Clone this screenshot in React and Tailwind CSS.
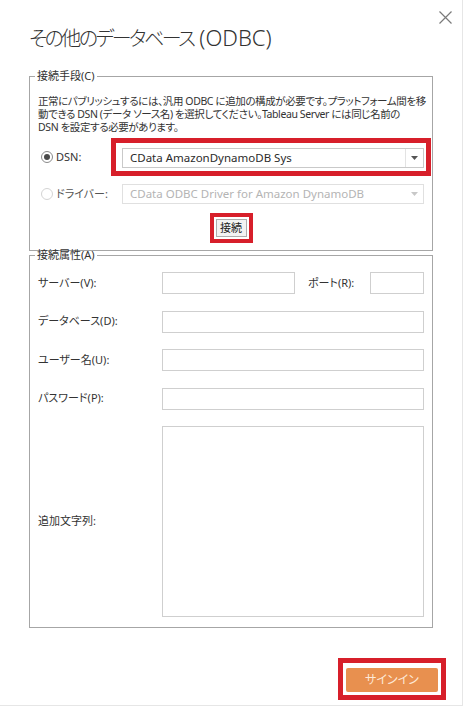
import React from 'react';

const FONT = "font-['Noto_Sans','Noto_Sans_CJK_JP',sans-serif] [font-feature-settings:'palt']";

function Radio({ checked, disabled }) {
  return (
    <span
      className={`flex items-center justify-center w-[12px] h-[12px] rounded-full border bg-white ${
        disabled ? 'border-[#d4d4d4]' : 'border-[#8a8a8a]'
      }`}
    >
      {checked && <span className="w-[6px] h-[6px] rounded-full bg-[#4a4a4a]" />}
    </span>
  );
}

function Combo({ value, disabled }) {
  return (
    <div
      className={`flex items-stretch h-[20px] border bg-white ${
        disabled ? 'border-[#e0e0e0]' : 'border-[#c9c9c9]'
      }`}
    >
      <span
        className={`flex-1 flex items-center pl-[7px] text-[11.5px] ${
          disabled ? 'text-[#b4b4b4]' : 'text-[#2b2b2b]'
        }`}
      >
        {value}
      </span>
      <span className={`w-[18px] flex items-center justify-center border-l ${disabled ? 'border-transparent' : 'border-[#e3e3e3]'}`}>
        <svg width="7" height="4" viewBox="0 0 7 4">
          <path d="M0 0h7L3.5 4z" fill={disabled ? '#c8c8c8' : '#555'} />
        </svg>
      </span>
    </div>
  );
}

function Field({ className = '' }) {
  return <div className={`h-[22px] border border-[#cfcfcf] bg-white ${className}`} />;
}

export default function App() {
  return (
    <div className={`w-[466px] h-[707px] bg-white text-[#333] ${FONT}`}>
      <div className="w-[463px] h-[706px] border-r border-b border-[#e6e6e6] flex flex-col">
        {/* Header */}
        <div className="flex items-start justify-between pl-[29px] pr-[10px] pt-[11px]">
          <h1 className="mt-[11px] text-[22px] leading-[30px] font-light text-[#333] whitespace-nowrap">
            <span className="text-[20px] tracking-[-2.5px]">その他のデータベース</span> (ODBC)
          </h1>
          <svg width="13" height="13" viewBox="0 0 13 13" className="shrink-0">
            <path d="M0.5 0.5l12 12M12.5 0.5l-12 12" stroke="#7a7a7a" strokeWidth="1.2" />
          </svg>
        </div>

        {/* 接続手段 */}
        <fieldset className="mt-[15px] ml-[29px] w-[404px] border border-[#a6a6a6] pl-[8px] pr-[1px] pb-[7px]">
          <legend className="ml-[-3px] px-[2px] text-[11px] leading-[14px] text-[#333]">接続手段(C)</legend>
          <p className="mt-[12px] text-[10.5px] leading-[13px] tracking-[-0.4px] whitespace-nowrap text-[#333]">
            正常にパブリッシュするには、汎用 ODBC に追加の構成が必要です。プラットフォーム間を移
            <br />
            動できる DSN (データ ソース名) を選択してください。Tableau Server には同じ名前の
            <br />
            DSN を設定する必要があります。
          </p>

          <div className="mt-[4px] flex items-center">
            <div className="w-[73px] flex items-center gap-[3px] pl-[3px]">
              <Radio checked />
              <span className="text-[11px]">DSN:</span>
            </div>
            <div className="w-[320px] border-[5px] border-[#d71f2a] pt-[5px] pb-[3px] pl-[6px] pr-[2px]">
              <Combo value="CData AmazonDynamoDB Sys" />
            </div>
          </div>

          <div className="mt-[8px] flex items-center">
            <div className="w-[84px] flex items-center gap-[3px] pl-[3px]">
              <Radio disabled />
              <span className="text-[11px] text-[#555]">ドライバー:</span>
            </div>
            <div className="w-[302px]">
              <Combo value="CData ODBC Driver for Amazon DynamoDB" disabled />
            </div>
          </div>

          <div className="mt-[9px] flex justify-center pr-[7px]">
            <div className="border-[4px] border-[#d71f2a] p-[2px]">
              <button className="w-[31px] h-[18px] flex items-center justify-center border border-[#adadad] bg-[#f3f3f3] text-[11px] text-[#222]">
                接続
              </button>
            </div>
          </div>
        </fieldset>

        {/* 接続属性 */}
        <fieldset className="mt-[-3px] ml-[29px] w-[404px] border border-[#a6a6a6] pl-[8px] pr-[8px] pb-[10px]">
          <legend className="ml-[-3px] px-[2px] text-[11px] leading-[14px] text-[#333]">接続属性(A)</legend>
          <div className="mt-[10px] flex flex-col gap-[16.5px] text-[11px]">
            <div className="flex items-center">
              <span className="w-[124px]">サーバー(V):</span>
              <Field className="w-[133px]" />
              <span className="ml-[13px] w-[62px]">ポート(R):</span>
              <Field className="w-[54px]" />
            </div>
            <div className="flex items-center">
              <span className="w-[124px]">データベース(D):</span>
              <Field className="flex-1" />
            </div>
            <div className="flex items-center">
              <span className="w-[124px]">ユーザー名(U):</span>
              <Field className="flex-1" />
            </div>
            <div className="flex items-center">
              <span className="w-[124px]">パスワード(P):</span>
              <Field className="flex-1" />
            </div>
            <div className="flex items-center">
              <span className="w-[124px]">追加文字列:</span>
              <div className="flex-1 h-[191px] border border-[#cfcfcf] bg-white" />
            </div>
          </div>
        </fieldset>

        {/* Footer */}
        <div className="mt-auto mb-[5px] flex justify-end pr-[16px]">
          <div className="border-[5px] border-[#d71f2a] p-[3px]">
            <button className="w-[92px] h-[24px] rounded-[2px] bg-[#e8904f] text-[12px] text-[#fde9d8]">
              サインイン
            </button>
          </div>
        </div>
      </div>
    </div>
  );
}
